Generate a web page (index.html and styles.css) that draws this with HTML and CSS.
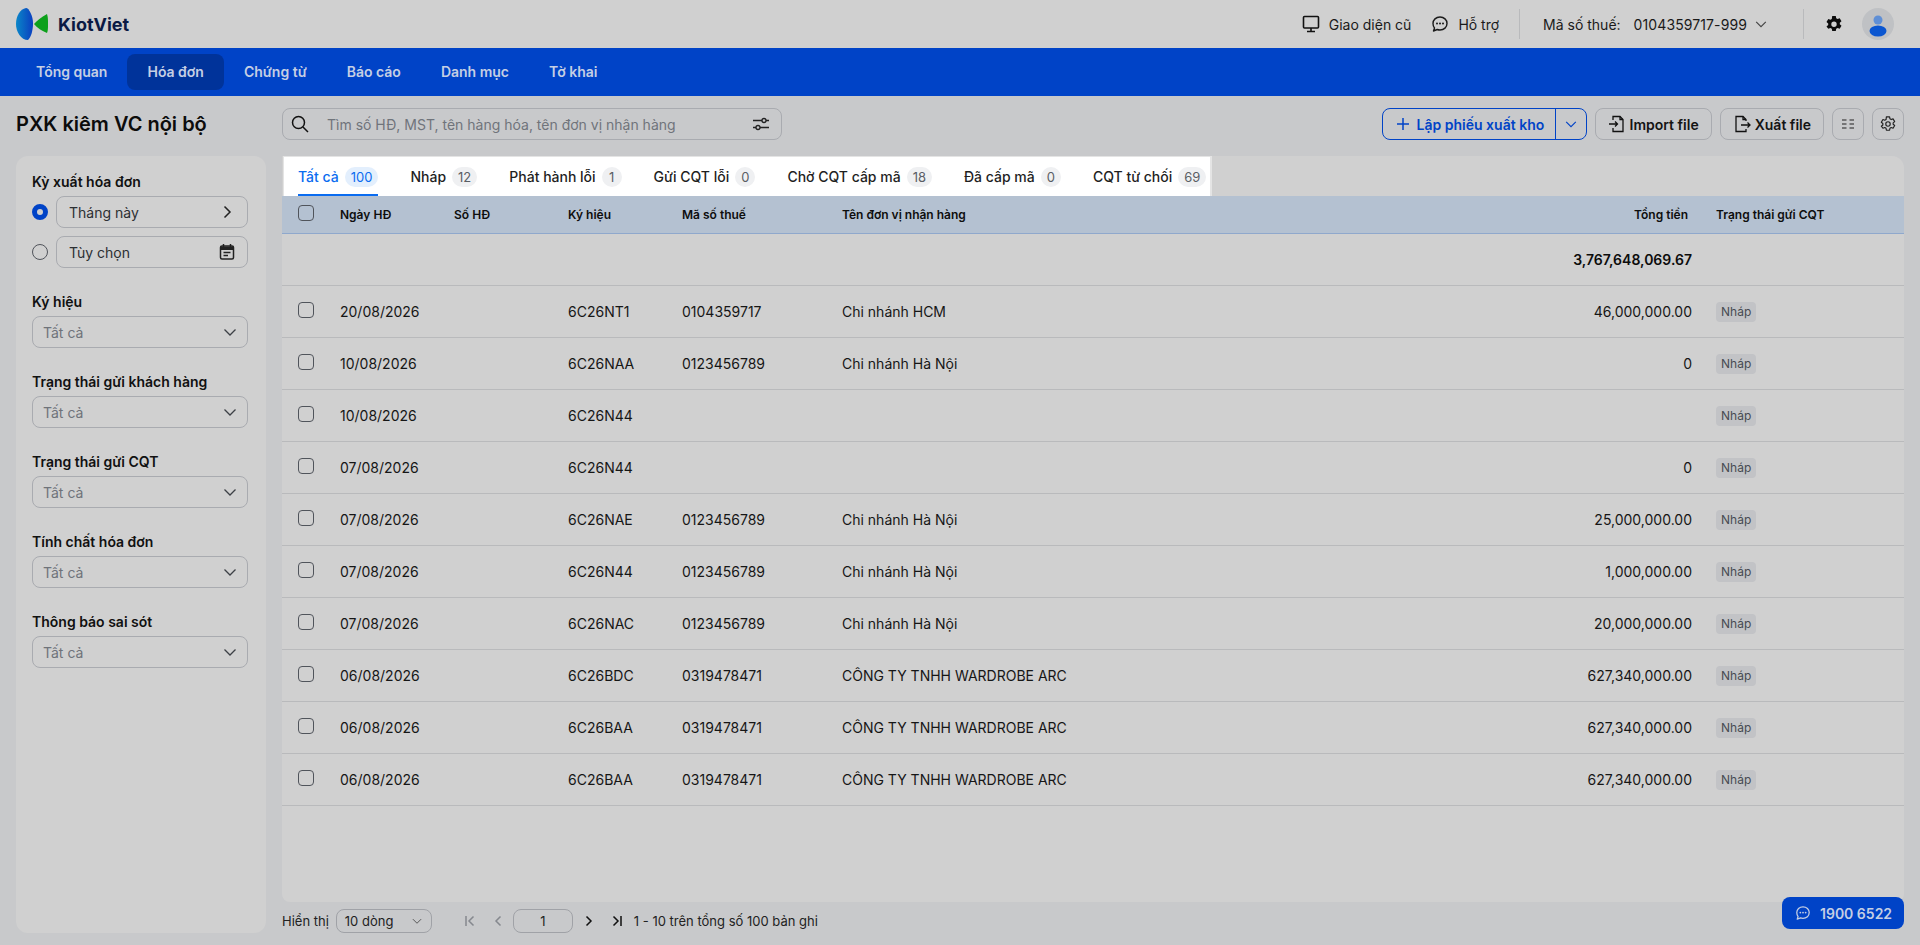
FILE: index.html
```html
<!DOCTYPE html>
<html lang="vi">
  <head>
    <meta charset="UTF-8" />
    <title>PXK kiêm VC nội bộ</title>
    <link rel="stylesheet" href="styles.css">
  </head>
  <body>
    <svg class="defs" width="0" height="0">
      <defs>
        <linearGradient id="lens" x1="0" y1="0" x2="1" y2="0">
          <stop offset="0" stop-color="#0a86c8" />
          <stop offset="1" stop-color="#0b3fc0" />
        </linearGradient>
        <symbol id="chev-down" viewBox="0 0 16 16"><path d="M2.5 5.5 8 11l5.500-5.500" fill="none" stroke="currentColor" stroke-width="1.300" /></symbol>
        <symbol id="chev-right" viewBox="0 0 16 16"><path d="M5.500 2.500 11 8l-5.500 5.500" fill="none" stroke="currentColor" stroke-width="1.500" /></symbol>
        <symbol id="chat" viewBox="0 0 18 18"><path d="M9 2c4 0 7 2.800 7 6.500S13 15 9 15c-1 0-2-.2-2.800-.5L2.500 16l1-3C2.500 11.800 2 10.300 2 8.500 2 4.800 5 2 9 2z" fill="none" stroke="currentColor" stroke-width="1.400" stroke-linejoin="round" /><circle cx="6" cy="8.500" r="1" fill="currentColor" /><circle cx="9" cy="8.500" r="1" fill="currentColor" /><circle cx="12" cy="8.500" r="1" fill="currentColor" /></symbol>
      </defs>
    </svg>

    <header class="topbar">
      <div class="brand">
        <svg width="32" height="32" viewBox="0 0 32 32">
          <path d="M10 0C13 0 17 8 17 15c0 8-2 14-5 17C5 32 0 24 0 16 0 8 4 1 10 0z" fill="url(#lens)" />
          <path d="M18 16c3-3 7-7 13-10 1 3 1 6 1 10s0 7-1 9c-5-2-10-5-13-9z" fill="#0da01b" />
        </svg>
        <span class="brand-name">KiotViet</span>
      </div>
      <div class="top-links">
        <a class="top-link">
          <svg width="18" height="18" viewBox="0 0 18 18"><rect x="1.500" y="1.500" width="15" height="11.500" rx="1" fill="none" stroke="#111" stroke-width="1.600" /><path d="M9 13v3M5 16.500h8" stroke="#111" stroke-width="1.600" /></svg>
          Giao diện cũ
        </a>
        <a class="top-link">
          <svg width="18" height="18"><use href="#chat" /></svg>
          Hỗ trợ
        </a>
        <span class="divider"></span>
        <div class="tax">
          <span>Mã số thuế:</span>
          <span class="tax-value">0104359717-999</span>
          <svg class="tax-chev" width="14" height="14"><use href="#chev-down" /></svg>
        </div>
        <span class="divider divider-2"></span>
        <svg class="gear" width="18" height="18" viewBox="0 0 18 18"><path fill-rule="evenodd" d="M7.200 1h3.600l.4 2.200 1.400.8 2.100-.8 1.800 3.100-1.700 1.400v1.600l1.700 1.400-1.800 3.100-2.100-.8-1.400.8-.4 2.200H7.200l-.4-2.200-1.400-.8-2.100.8L1.500 11.500l1.700-1.400V8.500L1.500 7.100l1.800-3.100 2.100.8 1.400-.8zM9 6.500a2.700 2.700 0 1 0 0 5.400 2.700 2.700 0 0 0 0-5.400z" fill="#0c0c0c" /></svg>
        <span class="avatar">
          <svg width="32" height="32" viewBox="0 0 32 32"><circle cx="16" cy="12" r="4.500" fill="#5f8fd6" /><ellipse cx="16" cy="23" rx="8.500" ry="5.500" fill="#0b56d0" /></svg>
        </span>
      </div>
    </header>

    <nav class="mainnav">
      <a>Tổng quan</a>
      <a class="active">Hóa đơn</a>
      <a>Chứng từ</a>
      <a>Báo cáo</a>
      <a>Danh mục</a>
      <a>Tờ khai</a>
    </nav>

    <div class="toolbar">
      <h1 class="page-title">PXK kiêm VC nội bộ</h1>
      <div class="search">
        <svg width="18" height="18" viewBox="0 0 18 18"><circle cx="7.500" cy="7.500" r="6" fill="none" stroke="#111" stroke-width="1.500" /><path d="m12 12 5 5" stroke="#111" stroke-width="1.500" /></svg>
        <span class="search-text">Tìm số HĐ, MST, tên hàng hóa, tên đơn vị nhận hàng</span>
        <svg width="18" height="18" viewBox="0 0 18 18" fill="none" stroke="#222" stroke-width="1.300"><path d="M1 5.500h9M14 5.500h3M1 12.500h3M8 12.500h9" /><circle cx="12" cy="5.500" r="2" /><circle cx="6" cy="12.500" r="2" /></svg>
      </div>
      <div class="actions">
        <div class="btn-split">
          <span class="split-main">
            <svg width="14" height="14" viewBox="0 0 14 14"><path d="M7 1v12M1 7h12" stroke="#0043c7" stroke-width="1.500" /></svg>
            Lập phiếu xuất kho
          </span>
          <span class="split-arrow"><svg width="14" height="14"><use href="#chev-down" /></svg></span>
        </div>
        <span class="btn">
          <svg width="18" height="18" viewBox="0 0 18 18" fill="none" stroke="#111" stroke-width="1.300"><path d="M5 5V1.500h7l3 3v12H5V13" /><path d="M12 1.500v3h3M1 9h8.500M7 6.500 9.500 9 7 11.500" /></svg>
          Import file
        </span>
        <span class="btn">
          <svg width="18" height="18" viewBox="0 0 18 18" fill="none" stroke="#111" stroke-width="1.300"><path d="M13 6V4.500l-3-3H3v15h10V14" /><path d="M10 1.500v3h3M8 10h9M14.500 7.500 17 10l-2.500 2.500" /></svg>
          Xuất file
        </span>
        <span class="btn btn-icon">
          <svg width="14" height="14" viewBox="0 0 14 14" stroke="#222" stroke-width="1.100"><path d="M1 3h4.500M1 7h4.500M1 11h4.500M8.500 3H13M8.500 7H13M8.500 11H13" /></svg>
        </span>
        <span class="btn btn-icon">
          <svg width="16" height="16" viewBox="0 0 18 18" fill="none" stroke="#222" stroke-width="1.300"><path d="M7.200 1h3.600l.4 2.200 1.400.8 2.100-.8 1.800 3.100-1.700 1.400v1.600l1.700 1.400-1.800 3.100-2.100-.8-1.400.8-.4 2.200H7.200l-.4-2.200-1.400-.8-2.100.8L1.500 11.500l1.700-1.400V8.500L1.500 7.100l1.800-3.100 2.100.8 1.400-.8z" stroke-linejoin="round" /><circle cx="9" cy="9" r="2.500" /></svg>
        </span>
      </div>
    </div>

    <div class="content">
      <aside class="sidebar">
        <div class="field">
          <label>Kỳ xuất hóa đơn</label>
          <div class="radio-row">
            <span class="radio checked"></span>
            <span class="select">Tháng này <svg class="dark-icon" width="16" height="16"><use href="#chev-right" /></svg></span>
          </div>
          <div class="radio-row">
            <span class="radio"></span>
            <span class="select">Tùy chọn
              <svg class="dark-icon" width="16" height="16" viewBox="0 0 16 16"><path d="M4.500 0v3M11.500 0v3" stroke="#222" stroke-width="1.500" /><rect x="1.500" y="2" width="13" height="13" rx="1.500" fill="none" stroke="#222" stroke-width="1.500" /><path d="M1.500 2.500h13V6h-13z" fill="#222" /><path d="M4.500 8.500h7M4.500 11.500h4.500" stroke="#222" stroke-width="1.300" /></svg>
            </span>
          </div>
        </div>
        <div class="field">
          <label>Ký hiệu</label>
          <span class="select muted">Tất cả <svg width="16" height="16"><use href="#chev-down" /></svg></span>
        </div>
        <div class="field">
          <label>Trạng thái gửi khách hàng</label>
          <span class="select muted">Tất cả <svg width="16" height="16"><use href="#chev-down" /></svg></span>
        </div>
        <div class="field">
          <label>Trạng thái gửi CQT</label>
          <span class="select muted">Tất cả <svg width="16" height="16"><use href="#chev-down" /></svg></span>
        </div>
        <div class="field">
          <label>Tính chất hóa đơn</label>
          <span class="select muted">Tất cả <svg width="16" height="16"><use href="#chev-down" /></svg></span>
        </div>
        <div class="field">
          <label>Thông báo sai sót</label>
          <span class="select muted">Tất cả <svg width="16" height="16"><use href="#chev-down" /></svg></span>
        </div>
      </aside>

      <main class="main">
        <section class="panel">
          <div class="tabs">
            <a class="tab active">Tất cả <span class="count">100</span></a>
            <a class="tab">Nháp <span class="count">12</span></a>
            <a class="tab">Phát hành lỗi <span class="count">1</span></a>
            <a class="tab">Gửi CQT lỗi <span class="count">0</span></a>
            <a class="tab">Chờ CQT cấp mã <span class="count">18</span></a>
            <a class="tab">Đã cấp mã <span class="count">0</span></a>
            <a class="tab">CQT từ chối <span class="count">69</span></a>
          </div>
          <table class="grid">
            <colgroup>
              <col class="c-check" /><col class="c-date" /><col class="c-num" /><col class="c-sym" /><col class="c-tax" /><col class="c-name" /><col /><col class="c-status" />
            </colgroup>
            <thead>
              <tr>
                <th><span class="check"></span></th>
                <th>Ngày HĐ</th>
                <th>Số HĐ</th>
                <th>Ký hiệu</th>
                <th>Mã số thuế</th>
                <th>Tên đơn vị nhận hàng</th>
                <th class="money">Tổng tiền</th>
                <th>Trạng thái gửi CQT</th>
              </tr>
            </thead>
            <tbody>
              <tr class="total">
                <td></td><td></td><td></td><td></td><td></td><td></td>
                <td class="money">3,767,648,069.67</td>
                <td></td>
              </tr>
              <tr>
                <td><span class="check"></span></td><td>20/08/2026</td><td></td><td>6C26NT1</td><td>0104359717</td><td>Chi nhánh HCM</td>
                <td class="money">46,000,000.00</td><td><span class="pill">Nháp</span></td>
              </tr>
              <tr>
                <td><span class="check"></span></td><td>10/08/2026</td><td></td><td>6C26NAA</td><td>0123456789</td><td>Chi nhánh Hà Nội</td>
                <td class="money">0</td><td><span class="pill">Nháp</span></td>
              </tr>
              <tr>
                <td><span class="check"></span></td><td>10/08/2026</td><td></td><td>6C26N44</td><td></td><td></td>
                <td class="money"></td><td><span class="pill">Nháp</span></td>
              </tr>
              <tr>
                <td><span class="check"></span></td><td>07/08/2026</td><td></td><td>6C26N44</td><td></td><td></td>
                <td class="money">0</td><td><span class="pill">Nháp</span></td>
              </tr>
              <tr>
                <td><span class="check"></span></td><td>07/08/2026</td><td></td><td>6C26NAE</td><td>0123456789</td><td>Chi nhánh Hà Nội</td>
                <td class="money">25,000,000.00</td><td><span class="pill">Nháp</span></td>
              </tr>
              <tr>
                <td><span class="check"></span></td><td>07/08/2026</td><td></td><td>6C26N44</td><td>0123456789</td><td>Chi nhánh Hà Nội</td>
                <td class="money">1,000,000.00</td><td><span class="pill">Nháp</span></td>
              </tr>
              <tr>
                <td><span class="check"></span></td><td>07/08/2026</td><td></td><td>6C26NAC</td><td>0123456789</td><td>Chi nhánh Hà Nội</td>
                <td class="money">20,000,000.00</td><td><span class="pill">Nháp</span></td>
              </tr>
              <tr>
                <td><span class="check"></span></td><td>06/08/2026</td><td></td><td>6C26BDC</td><td>0319478471</td><td>CÔNG TY TNHH WARDROBE ARC</td>
                <td class="money">627,340,000.00</td><td><span class="pill">Nháp</span></td>
              </tr>
              <tr>
                <td><span class="check"></span></td><td>06/08/2026</td><td></td><td>6C26BAA</td><td>0319478471</td><td>CÔNG TY TNHH WARDROBE ARC</td>
                <td class="money">627,340,000.00</td><td><span class="pill">Nháp</span></td>
              </tr>
              <tr>
                <td><span class="check"></span></td><td>06/08/2026</td><td></td><td>6C26BAA</td><td>0319478471</td><td>CÔNG TY TNHH WARDROBE ARC</td>
                <td class="money">627,340,000.00</td><td><span class="pill">Nháp</span></td>
              </tr>
            </tbody>
          </table>
        </section>

        <footer class="pager">
          <span>Hiển thị</span>
          <span class="page-size">10 dòng <svg width="12" height="12"><use href="#chev-down" /></svg></span>
          <svg class="pg first off" width="10" height="12" viewBox="0 0 10 12"><path d="M1 1v10M8.500 1.500 4 6l4.500 4.500" fill="none" stroke="currentColor" stroke-width="1.500" /></svg>
          <svg class="pg prev off" width="8" height="12" viewBox="0 0 8 12"><path d="M6.500 1.500 2 6l4.500 4.500" fill="none" stroke="currentColor" stroke-width="1.500" /></svg>
          <span class="page-num">1</span>
          <svg class="pg next" width="8" height="12" viewBox="0 0 8 12"><path d="M1.500 1.500 6 6l-4.500 4.500" fill="none" stroke="currentColor" stroke-width="1.500" /></svg>
          <svg class="pg last" width="10" height="12" viewBox="0 0 10 12"><path d="M9 1v10M1.500 1.500 6 6l-4.500 4.500" fill="none" stroke="currentColor" stroke-width="1.500" /></svg>
          <span class="page-info">1 - 10 trên tổng số 100 bản ghi</span>
        </footer>
      </main>
    </div>

    <a class="hotline">
      <svg width="16" height="16" viewBox="0 0 18 18"><use href="#chat" /></svg>
      1900 6522
    </a>
  </body>
</html>
```

FILE: styles.css
```css
* {
  box-sizing: border-box;
}
html,
body {
  height: 100%;
}
body {
  margin: 0;
  display: flex;
  flex-direction: column;
  background: #c8c9cb;
  color: #111;
  font-family: Inter, "Noto Sans", sans-serif;
  font-size: 14px;
  overflow: hidden;
}
.defs {
  position: absolute;
}

/* top bar */
.topbar {
  height: 48px;
  background: #d0d0d0;
  display: flex;
  align-items: center;
  justify-content: space-between;
  padding: 0 26px 0 16px;
}
.brand {
  display: flex;
  align-items: center;
  gap: 10px;
}
.brand-name {
  font-size: 18px;
  font-weight: 700;
  color: #0b1a44;
}
.top-links {
  display: flex;
  align-items: center;
}
.top-link {
  display: flex;
  align-items: center;
  gap: 9px;
  margin-right: 20px;
  color: #1a1a1a;
}
.divider {
  width: 1px;
  height: 30px;
  background: #b9babc;
}
.tax {
  display: flex;
  align-items: center;
  gap: 13px;
  margin-left: 23px;
  margin-right: 35px;
  color: #1a1a1a;
}
.tax-value {
  letter-spacing: 0.1px;
}
.tax-chev {
  margin-left: -6px;
  color: #444;
}
.gear {
  margin-left: 21px;
  margin-right: 19px;
}
.avatar {
  width: 32px;
  height: 32px;
  border-radius: 50%;
  background: #bfc1c4;
}
.avatar svg {
  display: block;
}

/* blue nav */
.mainnav {
  height: 48px;
  background: #0043c7;
  display: flex;
  align-items: center;
  padding-left: 16px;
}
.mainnav a {
  height: 36px;
  line-height: 36px;
  padding: 0 20px;
  border-radius: 8px;
  color: #c5cfe4;
  font-weight: 600;
}
.mainnav a.active {
  background: #00339a;
}

/* toolbar */
.toolbar {
  display: flex;
  align-items: center;
  height: 32px;
  margin: 12px 16px 16px;
}
.page-title {
  width: 266px;
  margin: 0;
  font-size: 20px;
  font-weight: 600;
  color: #0c0c0c;
}
.search {
  width: 500px;
  height: 32px;
  display: flex;
  align-items: center;
  padding: 0 11px 0 8px;
  border: 1px solid #a9abb0;
  border-radius: 8px;
}
.search-text {
  flex: 1;
  margin-left: 18px;
  color: #70747b;
}
.actions {
  margin-left: auto;
  display: flex;
  gap: 8px;
}
.btn,
.btn-split {
  height: 32px;
  display: flex;
  align-items: center;
  border: 1px solid #a9abb0;
  border-radius: 8px;
  font-weight: 600;
  color: #141414;
}
.btn {
  gap: 4px;
  padding: 0 12px;
}
.btn-icon {
  width: 32px;
  justify-content: center;
  padding: 0;
}
.btn-split {
  border-color: #0043c7;
  color: #0043c7;
}
.split-main {
  display: flex;
  align-items: center;
  gap: 7px;
  width: 173px;
  height: 100%;
  padding-left: 13px;
  border-right: 1px solid #0043c7;
}
.split-arrow {
  width: 30px;
  display: flex;
  justify-content: center;
}

/* body */
.content {
  flex: 1;
  display: flex;
  gap: 16px;
  padding: 0 16px 12px;
  min-height: 0;
}
.sidebar {
  width: 250px;
  background: #d0d0d0;
  border-radius: 12px;
  padding: 16px 18px 16px 16px;
  display: flex;
  flex-direction: column;
  gap: 24px;
}
.field {
  display: flex;
  flex-direction: column;
}
.field label {
  font-weight: 600;
  line-height: 20px;
  margin-bottom: 4px;
  color: #111;
}
.select {
  flex: 1;
  height: 32px;
  min-height: 32px;
  display: flex;
  align-items: center;
  justify-content: space-between;
  padding: 0 12px;
  border: 1px solid #a9abb0;
  border-radius: 8px;
  color: #2c2f33;
}
.select.muted {
  color: #6f737a;
  padding: 0 9px 0 10px;
}
.select.muted svg {
  color: #3d4046;
}
.dark-icon {
  color: #222;
}
.radio-row {
  display: flex;
  align-items: center;
  gap: 8px;
  margin-bottom: 8px;
}
.radio-row:last-child {
  margin-bottom: 0;
}
.radio {
  flex: none;
  width: 16px;
  height: 16px;
  border: 1px solid #50545b;
  border-radius: 50%;
}
.radio.checked {
  border: 5px solid #0043c7;
}

.main {
  flex: 1;
  min-width: 0;
  display: flex;
  flex-direction: column;
}
.panel {
  flex: none;
  height: 746px;
  background: #d0d0d0;
  border-radius: 0 12px 8px 8px;
}
.tabs {
  width: 929px;
  height: 40px;
  background: #fff;
  border: solid #e4e4e4;
  border-width: 1px 2px 0 1px;
  display: flex;
  gap: 32px;
  padding-left: 14px;
  margin-left: 1px;
}
.tab {
  height: 39px;
  display: flex;
  align-items: center;
  gap: 6px;
  color: #1f1f1f;
  font-weight: 500;
}
.tab.active {
  color: #0a6cf0;
  border-bottom: 2px solid #0a6cf0;
  padding-top: 2px;
}
.count {
  min-width: 20px;
  height: 20px;
  line-height: 20px;
  padding: 0 6px;
  border-radius: 10px;
  background: #eff0f2;
  color: #5a5e65;
  font-size: 13px;
  font-weight: 400;
  text-align: center;
}
.tab.active .count {
  background: #e3effd;
  color: #0a6cf0;
}

/* table */
.grid {
  width: 100%;
  table-layout: fixed;
  border-collapse: collapse;
}
.c-check {
  width: 58px;
}
.c-date,
.c-num,
.c-sym {
  width: 114px;
}
.c-tax {
  width: 160px;
}
.c-name {
  width: 500px;
}
.c-status {
  width: 188px;
}
.grid th {
  height: 37px;
  background: #b4c1d1;
  border-bottom: 1px solid #8fa8cc;
  font-size: 12px;
  font-weight: 600;
  text-align: left;
  padding: 0;
  color: #0e0e0e;
}
.grid th:first-child,
.grid td:first-child {
  padding-left: 16px;
}
.grid td {
  height: 52px;
  padding: 0;
  border-bottom: 1px solid #b9babc;
  color: #161616;
}
.grid .money {
  text-align: right;
  padding-right: 24px;
}
.grid th.money {
  padding-right: 28px;
}
.total .money {
  font-weight: 600;
  color: #0c0c0c;
}
.check {
  display: block;
  width: 16px;
  height: 16px;
  margin-top: -3px;
  border: 1px solid #50545b;
  border-radius: 4px;
}
.pill {
  display: block;
  width: fit-content;
  height: 20px;
  line-height: 20px;
  margin-top: 2px;
  padding: 0 5px;
  border-radius: 4px;
  background: #c2c3c6;
  color: #474b52;
  font-size: 12px;
}

/* pagination */
.pager {
  flex: 1;
  display: flex;
  align-items: center;
  font-size: 13px;
  color: #222;
  padding-top: 7px;
}
.page-size {
  width: 96px;
  height: 24px;
  display: flex;
  align-items: center;
  justify-content: space-between;
  margin-left: 7px;
  padding: 0 8px;
  border: 1px solid #a0a2a7;
  border-radius: 8px;
}
.page-size svg {
  color: #555;
}
.pg {
  color: #111;
  flex: none;
}
.pg.off {
  color: #85888e;
}
.first {
  margin-left: 33px;
}
.prev {
  margin-left: 19px;
}
.page-num {
  width: 60px;
  height: 24px;
  line-height: 22px;
  margin-left: 11px;
  text-align: center;
  border: 1px solid #a0a2a7;
  border-radius: 8px;
}
.next {
  margin-left: 12px;
}
.last {
  margin-left: 19px;
}
.page-info {
  margin-left: 12px;
}

.hotline {
  position: fixed;
  right: 16px;
  bottom: 16px;
  width: 122px;
  height: 32px;
  display: flex;
  align-items: center;
  gap: 9px;
  padding-left: 13px;
  background: #0043c7;
  border-radius: 8px;
  color: #c5cfe4;
  font-weight: 600;
}
```
